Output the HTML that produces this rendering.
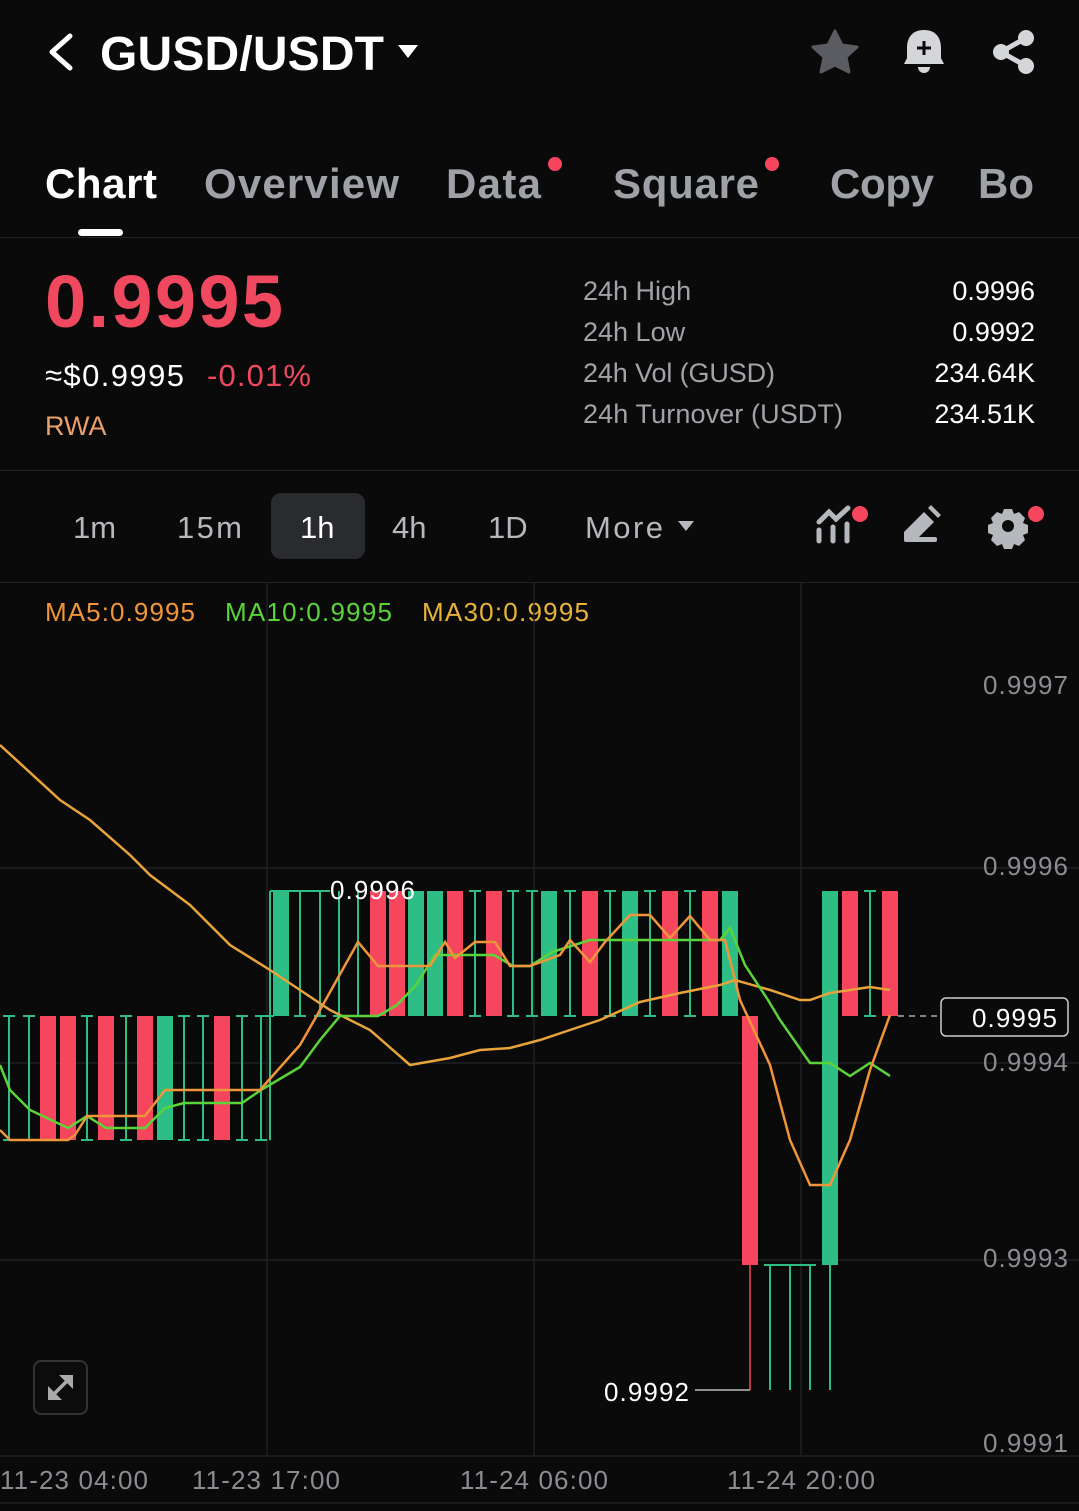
<!DOCTYPE html>
<html><head><meta charset="utf-8"><style>
html,body{margin:0;padding:0;background:#0a0a0a;width:1079px;height:1511px;overflow:hidden}
svg{display:block}
text{font-family:"Liberation Sans",sans-serif}
</style></head><body>
<svg width="1079" height="1511" viewBox="0 0 1079 1511" xmlns="http://www.w3.org/2000/svg">
<rect width="1079" height="1511" fill="#0a0a0a"/>
<path d="M70 36 L52 52 L70 68" fill="none" stroke="#fff" stroke-width="5" stroke-linecap="round" stroke-linejoin="round"/>
<text x="100" y="70" font-size="48" font-weight="bold" fill="#fff" textLength="284">GUSD/USDT</text>
<path d="M398 45 L418 45 L408 58 Z" fill="#fff"/>
<path d="M835 31 L842 45 L857 47 L846 57 L849 72 L835 65 L821 72 L824 57 L813 47 L828 45 Z" fill="#5a5c62" stroke="#5a5c62" stroke-width="3" stroke-linejoin="round"/>
<path d="M924 30 C912 30 907 38 907 48 L907 58 L904 64 L944 64 L941 58 L941 48 C941 38 936 30 924 30 Z" fill="#d4d6d9"/>
<path d="M918 67 a6 6 0 0 0 12 0 Z" fill="#d4d6d9"/>
<path d="M924 41 v14 M917 48 h14" stroke="#0a0a0a" stroke-width="3"/>
<g fill="#d4d6d9"><circle cx="1026" cy="38" r="8"/><circle cx="1026" cy="66" r="8"/><circle cx="1001" cy="52" r="8"/></g>
<path d="M1026 38 L1001 52 L1026 66" stroke="#d4d6d9" stroke-width="5" fill="none"/>
<g font-size="42" font-weight="bold">
<text x="45" y="198" fill="#fff" textLength="112">Chart</text>
<text x="204" y="198" fill="#9ea1a6" textLength="195">Overview</text>
<text x="446" y="198" fill="#9ea1a6" textLength="95">Data</text>
<text x="613" y="198" fill="#9ea1a6" textLength="146">Square</text>
<text x="830" y="198" fill="#9ea1a6" textLength="104">Copy</text>
<text x="978" y="198" fill="#9ea1a6">Bo</text>
</g>
<circle cx="555" cy="164" r="7" fill="#f6465d"/>
<circle cx="772" cy="164" r="7" fill="#f6465d"/>
<rect x="78" y="229" width="45" height="7" rx="3.5" fill="#fff"/>
<line x1="0" y1="237.5" x2="1079" y2="237.5" stroke="#222" stroke-width="1"/>
<text x="45" y="327" font-size="74" font-weight="bold" fill="#f0485f" textLength="238">0.9995</text>
<text x="45" y="386" font-size="31" fill="#fff" textLength="139">≈$0.9995</text>
<text x="207" y="386" font-size="31" fill="#f0485f" textLength="104">-0.01%</text>
<text x="45" y="435" font-size="27" fill="#e9a06a">RWA</text>
<g font-size="27" fill="#a0a3a8">
<text x="583" y="300">24h High</text>
<text x="583" y="341">24h Low</text>
<text x="583" y="382" textLength="192">24h Vol (GUSD)</text>
<text x="583" y="423" textLength="260">24h Turnover (USDT)</text>
</g>
<g font-size="27" fill="#fff" text-anchor="end">
<text x="1035" y="300">0.9996</text>
<text x="1035" y="341">0.9992</text>
<text x="1035" y="382">234.64K</text>
<text x="1035" y="423">234.51K</text>
</g>
<line x1="0" y1="470.5" x2="1079" y2="470.5" stroke="#222"/>
<rect x="271" y="493" width="94" height="66" rx="10" fill="#2a2b2e"/>
<g font-size="31" fill="#b5b8bc">
<text x="73" y="538">1m</text>
<text x="177" y="538" textLength="65">15m</text>
<text x="300" y="538" fill="#fff">1h</text>
<text x="392" y="538">4h</text>
<text x="488" y="538">1D</text>
<text x="585" y="538" textLength="78">More</text>
</g>
<path d="M678 521 L694 521 L686 531 Z" fill="#b5b8bc"/>
<g stroke="#b5b8bc" stroke-width="5" stroke-linecap="round" fill="none">
<path d="M819 530 v11 M833 527 v14 M847 524 v17"/>
<path d="M819 522 L829 512 L836 519 L848 508"/>
</g>
<circle cx="860" cy="514" r="8" fill="#f6465d"/>
<path d="M904 532 L924 512 L934 522 L916 540 L904 540 Z M928 508 L931 505 L941 515 L938 518 Z" fill="#b5b8bc"/>
<rect x="904" y="537" width="33" height="5" rx="2" fill="#b5b8bc"/>
<g transform="translate(1008,526)">
<path d="M-4 -17 h8 l2 5 l5 -2 l6 6 l-2 5 l5 2 v8 l-5 2 l2 5 l-6 6 l-5 -2 l-2 5 h-8 l-2 -5 l-5 2 l-6 -6 l2 -5 l-5 -2 v-8 l5 -2 l-2 -5 l6 -6 l5 2 z" fill="#b5b8bc"/>
<circle r="6" fill="#0a0a0a"/>
</g>
<circle cx="1036" cy="514" r="8" fill="#f6465d"/>
<line x1="0" y1="582.5" x2="1079" y2="582.5" stroke="#222"/>
<text x="45" y="621" font-size="26" fill="#f0953a" textLength="150">MA5:0.9995</text>
<text x="225" y="621" font-size="26" fill="#5bd43a" textLength="167">MA10:0.9995</text>
<text x="422" y="621" font-size="26" fill="#e8b33a" textLength="167">MA30:0.9995</text>
<g stroke="#1e1f22" stroke-width="1.5">
<line x1="0" y1="868" x2="1079" y2="868"/>
<line x1="0" y1="1063" x2="1079" y2="1063"/>
<line x1="0" y1="1260" x2="1079" y2="1260"/>
<line x1="267" y1="583" x2="267" y2="1456"/>
<line x1="534" y1="583" x2="534" y2="1456"/>
<line x1="801" y1="583" x2="801" y2="1456"/>
<line x1="0" y1="1456" x2="1079" y2="1456"/>
<line x1="0" y1="1503" x2="1079" y2="1503"/>
</g>
<g font-size="26" fill="#8a8d92" text-anchor="end">
<text x="1068" y="694" textLength="85">0.9997</text>
<text x="1068" y="875" textLength="85">0.9996</text>
<text x="1068" y="1071" textLength="85">0.9994</text>
<text x="1068" y="1267" textLength="85">0.9993</text>
<text x="1068" y="1452" textLength="85">0.9991</text>
</g>
<g stroke="#2ebd85" stroke-width="2">
<path d="M9 1016v124M29 1016v124M87 1016v124M126 1016v124M184 1016v124M203 1016v124M242 1016v124M261 1016v124"/>
<path d="M3 1016h12M3 1140h12M23 1016h12M23 1140h12M81 1016h12M81 1140h12M120 1016h12M120 1140h12M178 1016h12M178 1140h12M197 1016h12M197 1140h12M236 1016h12M236 1140h12M255 1016h12M255 1140h12"/>
<path d="M270 891v249M270 891h60"/>
<path d="M300 891v125M320 891v125M339 891v125M358 891v125M475 891v125M513 891v125M532 891v125M570 891v125M610 891v125M650 891v125M690 891v125M870 891v125"/>
<path d="M294 1016h12M314 1016h12M333 1016h12M352 1016h12M469 891h12M469 1016h12M507 891h12M507 1016h12M526 891h12M526 1016h12M564 891h12M564 1016h12M604 891h12M604 1016h12M644 891h12M644 1016h12M684 891h12M684 1016h12M864 891h12M864 1016h12M262 1016h12"/>
<path d="M770 1265v125M790 1265v125M810 1265v125M830 1265v125M764 1265h52"/>
</g>
<g fill="#2ebd85">
<rect x="157" y="1016" width="16" height="124"/>
<rect x="273" y="891" width="16" height="125"/>
<rect x="408" y="891" width="16" height="125"/>
<rect x="427" y="891" width="16" height="125"/>
<rect x="541" y="891" width="16" height="125"/>
<rect x="622" y="891" width="16" height="125"/>
<rect x="722" y="891" width="16" height="125"/>
<rect x="822" y="891" width="16" height="374"/>
</g>
<g fill="#f6465d">
<rect x="40" y="1016" width="16" height="124"/>
<rect x="60" y="1016" width="16" height="124"/>
<rect x="98" y="1016" width="16" height="124"/>
<rect x="137" y="1016" width="16" height="124"/>
<rect x="214" y="1016" width="16" height="124"/>
<rect x="370" y="891" width="16" height="125"/>
<rect x="389" y="891" width="16" height="125"/>
<rect x="447" y="891" width="16" height="125"/>
<rect x="486" y="891" width="16" height="125"/>
<rect x="582" y="891" width="16" height="125"/>
<rect x="662" y="891" width="16" height="125"/>
<rect x="702" y="891" width="16" height="125"/>
<rect x="742" y="1016" width="16" height="249"/>
<rect x="842" y="891" width="16" height="125"/>
<rect x="882" y="891" width="16" height="125"/>
</g>
<path d="M750 1265v125" stroke="#f6465d" stroke-width="1.5" fill="none"/>
<path d="M750 1390h-55" stroke="#bbb" stroke-width="1.5" fill="none"/>
<polyline fill="none" stroke="#e8a33a" stroke-width="2.5" points="0,745 60,800 90,820 130,855 150,875 190,905 230,945 270,970 300,990 330,1010 370,1030 410,1065 450,1058 480,1050 510,1048 540,1040 570,1030 600,1020 640,1002 680,993 720,985 735,980 770,990 800,1000 810,1000 830,993 870,987 890,990"/>
<polyline fill="none" stroke="#5bd43a" stroke-width="2.5" points="0,1065 10,1090 30,1110 68,1128 87,1116 106,1128 145,1128 165,1108 184,1103 242,1103 261,1090 300,1067 320,1040 340,1016 378,1016 397,1005 416,985 435,955 475,955 494,955 513,966 530,966 552,952 590,940 620,940 720,940 730,928 745,965 768,1000 780,1020 810,1063 830,1063 850,1076 870,1063 890,1076"/>
<polyline fill="none" stroke="#f0953a" stroke-width="2.5" points="0,1130 10,1140 68,1140 75,1135 87,1116 145,1116 165,1090 260,1090 300,1045 320,1010 358,942 378,966 430,966 445,942 455,958 475,942 495,942 510,966 530,966 560,955 570,940 590,962 605,942 630,915 650,915 670,938 690,916 710,940 725,940 740,1000 770,1065 790,1140 810,1185 830,1185 850,1140 870,1070 890,1015"/>
<text x="330" y="899" font-size="26" fill="#fff" textLength="85">0.9996</text>
<text x="604" y="1401" font-size="26" fill="#fff" textLength="85">0.9992</text>
<path d="M898 1016h42" stroke="#aaa" stroke-width="1.5" stroke-dasharray="6,5"/>
<rect x="941" y="998" width="127" height="38" rx="5" fill="#0a0a0a" stroke="#ccc" stroke-width="1.5"/>
<text x="1057" y="1027" font-size="26" fill="#fff" text-anchor="end" textLength="85">0.9995</text>
<rect x="34" y="1361" width="53" height="53" rx="7" fill="#0c0c0c" stroke="#333" stroke-width="2"/>
<path d="M52 1396 L69 1379" stroke="#aaa" stroke-width="3.5"/>
<path d="M48 1386 L48 1400 L62 1400 Z M73 1375 L73 1389 L59 1375 Z" fill="#aaa"/>
<g font-size="26" fill="#8a8d92">
<text x="0" y="1489" textLength="148">11-23 04:00</text>
<text x="192" y="1489" textLength="148">11-23 17:00</text>
<text x="460" y="1489" textLength="148">11-24 06:00</text>
<text x="727" y="1489" textLength="148">11-24 20:00</text>
</g>
</svg>
</body></html>
